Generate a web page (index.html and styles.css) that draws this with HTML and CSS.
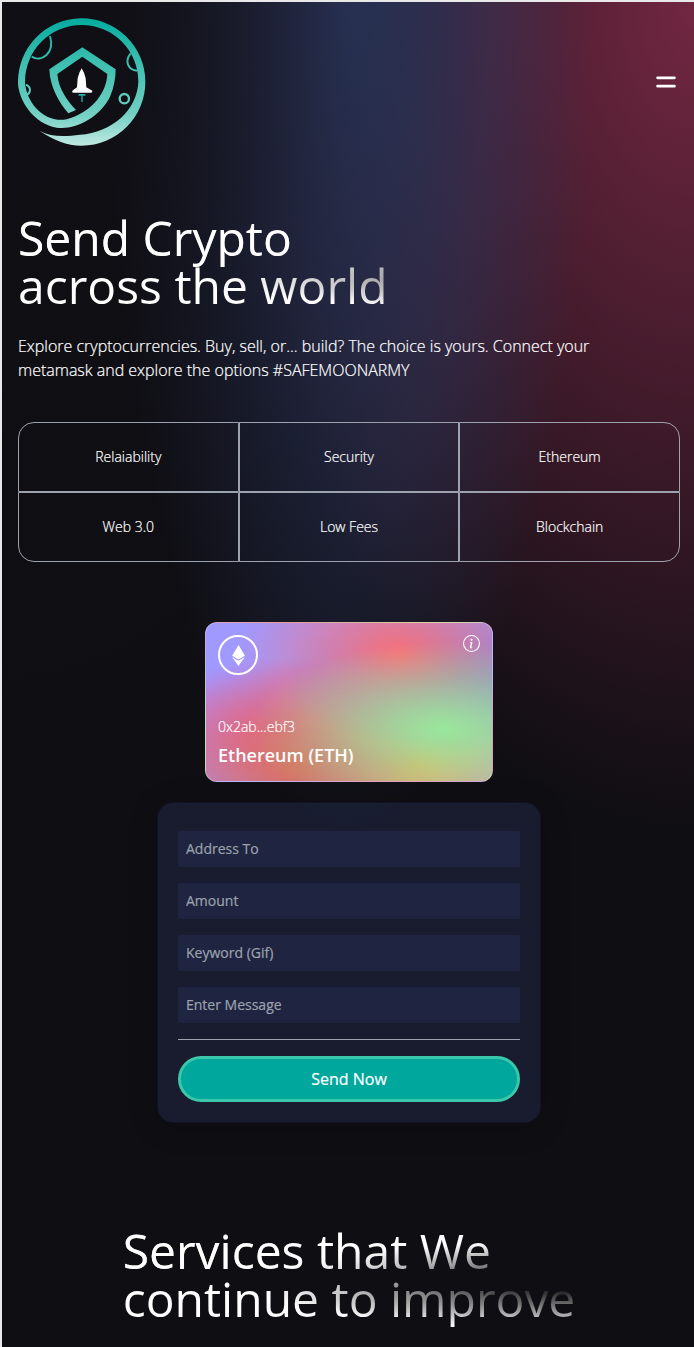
FILE: index.html
```html
<!DOCTYPE html>
<html lang="en">
<head>
    <meta charset="UTF-8">
    <meta name="viewport" content="width=device-width, initial-scale=1.0">
    <title>Send Crypto</title>
    <link rel="stylesheet" href="styles.css">
</head>
<body>
    <div class="page">
        <div class="welcome-bg">
            <nav class="navbar">
                <svg class="logo" viewBox="54 54 384 384" aria-label="SafeMoon">
                    <defs>
                        <linearGradient id="logoGrad" gradientUnits="userSpaceOnUse" x1="0" y1="54" x2="0" y2="437">
                            <stop offset="0" stop-color="#05ab9f"/>
                            <stop offset="0.35" stop-color="#3dbfb0"/>
                            <stop offset="0.75" stop-color="#72d0c3"/>
                            <stop offset="1" stop-color="#c0e8e1"/>
                        </linearGradient>
                    </defs>
                    <!-- ring, tail and shield are one spiral shape -->
                    <path fill="url(#logoGrad)" d="M118 392 C160 420 200 437 245 437 A191 191 0 1 0 54 250 C56 300 100 372 170 383 C230 390 300 350 330 290 C342 262 347 235 347 208 L247 142 L148 208 C150 260 175 305 205 340 L228 330 C200 300 175 265 172 222 L247 170 L322 222 C320 275 280 335 200 358 C135 370 78 310 75 245 A170 170 0 1 1 415 245 C412 330 335 398 240 404 C195 410 155 412 118 392 Z"/>
                    <g fill="none" stroke="url(#logoGrad)" stroke-width="6">
                        <path d="M95 170 C125 188 165 160 150 108"/>
                        <path d="M392 160 C372 185 385 210 412 212"/>
                        <path d="M78 254 C95 262 92 278 80 286"/>
                        <circle cx="373" cy="296" r="14" stroke-width="7"/>
                    </g>
                    <path fill="#fff" d="M245 205 L252 218 L257 235 L259 262 L277 272 Q278 278 272 278 L220 278 Q215 278 217 272 L231 262 L233 235 L238 218 Z"/>
                    <path fill="#1fb5a8" d="M236 282 H256 V287 H248 V306 H244 V287 H236 Z"/>
                </svg>
                <svg class="menu-icon" viewBox="0 0 20 20" fill="#fff">
                    <path fill-rule="evenodd" clip-rule="evenodd" d="M3 7a1 1 0 011-1h12a1 1 0 110 2H4a1 1 0 01-1-1zM3 13a1 1 0 011-1h12a1 1 0 110 2H4a1 1 0 01-1-1z"/>
                </svg>
            </nav>

            <section class="welcome">
                <h1 class="title text-gradient">Send Crypto <br> across the world</h1>
                <p class="intro">Explore cryptocurrencies. Buy, sell, or... build? The choice is yours. Connect your metamask and explore the options #SAFEMOONARMY</p>

                <div class="features">
                    <div class="feature corner-tl">Relaiability</div>
                    <div class="feature">Security</div>
                    <div class="feature corner-tr">Ethereum</div>
                    <div class="feature corner-bl">Web 3.0</div>
                    <div class="feature">Low Fees</div>
                    <div class="feature corner-br">Blockchain</div>
                </div>

                <div class="send-column">
                    <div class="eth-card">
                        <div class="card-top">
                            <div class="eth-circle">
                                <svg class="eth-icon" viewBox="0 0 24 24" fill="#fff">
                                    <path d="M11.944 17.97L4.58 13.62 11.943 24l7.37-10.38-7.372 4.35h.003zM12.056 0L4.69 12.223l7.365 4.354 7.365-4.35L12.056 0z"/>
                                </svg>
                            </div>
                            <svg class="info-icon" viewBox="0 0 16 16" fill="#fff">
                                <path d="M8 15A7 7 0 1 1 8 1a7 7 0 0 1 0 14zm0 1A8 8 0 1 0 8 0a8 8 0 0 0 0 16z"/>
                                <path d="m8.93 6.588-2.29.287-.082.38.45.083c.294.07.352.176.288.469l-.738 3.468c-.194.897.105 1.319.808 1.319.545 0 1.178-.252 1.465-.598l.088-.416c-.2.176-.492.246-.686.246-.275 0-.375-.193-.304-.533L8.93 6.588zM9 4.5a1 1 0 1 1-2 0 1 1 0 0 1 2 0z"/>
                            </svg>
                        </div>
                        <p class="card-address">0x2ab...ebf3</p>
                        <p class="card-name">Ethereum (ETH)</p>
                    </div>

                    <form class="send-form">
                        <input type="text" placeholder="Address To">
                        <input type="number" placeholder="Amount">
                        <input type="text" placeholder="Keyword (Gif)">
                        <input type="text" placeholder="Enter Message">
                        <div class="divider"></div>
                        <button type="button">Send Now</button>
                    </form>
                </div>
            </section>
        </div>

        <section class="services">
            <h1 class="title text-gradient">Services that We <br> continue to improve</h1>
        </section>
    </div>
</body>
</html>
```

FILE: styles.css
```css
* {
    box-sizing: border-box;
}
html, body {
    margin: 0;
    height: 100%;
    overflow: hidden;
}
body {
    background-color: #e9e9e9;
    padding: 2px 0 0 2px;
    font-family: "Open Sans", "Liberation Sans", sans-serif;
    color: #fff;
}
.page {
    height: 100%;
    overflow: hidden;
    background-color: #0f0e13;
}
.welcome-bg {
    background-color: #0f0e13;
    background-image:
        radial-gradient(at 0% 0%, hsla(253, 16%, 7%, 1) 0, transparent 50%),
        radial-gradient(at 50% 0%, hsla(225, 39%, 30%, 1) 0, transparent 50%),
        radial-gradient(at 100% 0%, hsla(339, 49%, 30%, 1) 0, transparent 50%);
}
.navbar {
    display: flex;
    justify-content: space-between;
    align-items: center;
    padding: 16px 14px 16px 16px;
}
.logo {
    width: 128px;
    height: 128px;
}
.menu-icon {
    width: 28px;
    height: 28px;
}
.welcome {
    display: flex;
    flex-direction: column;
    align-items: flex-start;
    padding: 48px 14px 48px 16px;
}
.title {
    margin: 0;
    padding: 4px 0;
    font-size: 48px;
    line-height: 48px;
    font-weight: 400;
}
.welcome .title {
    align-self: stretch;
}
.text-gradient {
    background-color: #fff;
    background-image:
        radial-gradient(at 4% 36%, hsla(0, 0%, 100%, 1) 0, transparent 53%),
        radial-gradient(at 100% 60%, rgb(0, 0, 0) 0, transparent 50%);
    -webkit-background-clip: text;
    background-clip: text;
    -webkit-text-fill-color: transparent;
}
.intro {
    width: 91.666%;
    margin: 20px 0 0;
    font-size: 16px;
    line-height: 24px;
    font-weight: 300;
    -webkit-text-stroke: 0.2px #fff;
}
.features {
    display: grid;
    grid-template-columns: repeat(3, 1fr);
    width: 100%;
    margin-top: 40px;
}
.feature {
    display: flex;
    justify-content: center;
    align-items: center;
    min-height: 70px;
    padding: 0 8px 2px;
    border: 1px solid #9ca3af;
    font-size: 14px;
    font-weight: 300;
    -webkit-text-stroke: 0.2px #fff;
}
.corner-tl {
    border-top-left-radius: 16px;
}
.corner-tr {
    border-top-right-radius: 16px;
}
.corner-bl {
    border-bottom-left-radius: 16px;
}
.corner-br {
    border-bottom-right-radius: 16px;
}
.send-column {
    display: flex;
    flex-direction: column;
    align-items: center;
    width: 100%;
    margin-top: 40px;
}
.eth-card {
    display: flex;
    flex-direction: column;
    justify-content: flex-end;
    width: 288px;
    height: 160px;
    margin: 20px 0;
    padding: 12px;
    border: 1px solid rgba(255, 255, 255, 0.3);
    border-radius: 12px;
    background-color: #a099ff;
    background-image:
        radial-gradient(at 83% 67%, rgb(152, 231, 156) 0, transparent 58%),
        radial-gradient(at 67% 20%, hsla(357, 94%, 71%, 1) 0, transparent 59%),
        radial-gradient(at 88% 35%, hsla(222, 81%, 65%, 1) 0, transparent 50%),
        radial-gradient(at 31% 91%, hsla(9, 61%, 61%, 1) 0, transparent 52%),
        radial-gradient(at 27% 71%, hsla(336, 91%, 65%, 1) 0, transparent 49%),
        radial-gradient(at 74% 89%, hsla(30, 98%, 65%, 1) 0, transparent 51%),
        radial-gradient(at 53% 75%, hsla(174, 94%, 68%, 1) 0, transparent 45%);
}
.card-top {
    display: flex;
    justify-content: space-between;
    align-items: flex-start;
    flex: 1;
}
.eth-circle {
    display: flex;
    justify-content: center;
    align-items: center;
    width: 40px;
    height: 40px;
    border: 2px solid #fff;
    border-radius: 50%;
}
.eth-icon {
    width: 21px;
    height: 21px;
}
.info-icon {
    width: 17px;
    height: 17px;
}
.card-address {
    margin: 0;
    font-size: 14px;
    line-height: 20px;
    font-weight: 300;
    -webkit-text-stroke: 0.2px #fff;
}
.card-name {
    margin: 4px 0 0;
    font-size: 18px;
    line-height: 28px;
    font-weight: 600;
}
.send-form {
    display: flex;
    flex-direction: column;
    width: 384px;
    padding: 20px;
    border: 1px solid rgba(0, 0, 0, 0.3);
    border-radius: 16px;
    background: rgb(39 51 89 / 40%);
    box-shadow: 0 4px 30px rgba(0, 0, 0, 0.2);
}
.send-form input {
    width: 100%;
    height: 36px;
    margin: 8px 0;
    padding: 7px 8px 9px;
    border: none;
    border-radius: 2px;
    outline: none;
    background: rgb(39 51 89 / 40%);
    color: #fff;
    font-family: inherit;
    font-size: 14px;
}
.send-form input::placeholder {
    color: #9ca3af;
    -webkit-text-stroke: 0.2px #9ca3af;
}
.divider {
    width: 100%;
    height: 1px;
    margin: 8px 0;
    background-color: #9ca3af;
}
.send-form button {
    width: 100%;
    height: 46px;
    margin-top: 8px;
    border: 3px solid #3bc7a9;
    border-radius: 999px;
    background-color: #00a79d;
    color: #fff;
    font-family: inherit;
    font-size: 16px;
    -webkit-text-stroke: 0.2px #fff;
    cursor: pointer;
}
.services {
    display: flex;
    flex-direction: column;
    align-items: center;
    padding: 52px 14px 0 16px;
}
```
